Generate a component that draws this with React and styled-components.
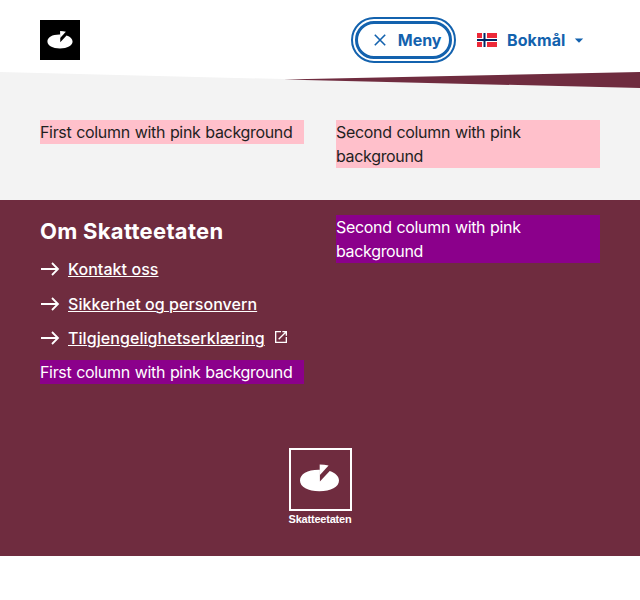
import React from 'react';
import styled, { createGlobalStyle } from 'styled-components';

const burgundy = '#6f2c3f';
const blue = '#1362ae';

const GlobalStyle = createGlobalStyle`
  *, *::before, *::after { box-sizing: border-box; }
  body {
    margin: 0;
    background: #fff;
    color: #1f1f1f;
    font-family: Inter, "Liberation Sans", sans-serif;
    font-size: 16px;
    line-height: 24px;
  }
`;

const Header = styled.header`
  height: 72px;
  padding: 12px 56px 4px 40px;
  display: flex;
  align-items: center;
  justify-content: space-between;
`;

const HomeLink = styled.a`
  width: 40px;
  height: 40px;
  margin: 8px 0;
  background: #000;
  svg { display: block; }
`;

const Actions = styled.div`
  display: flex;
  align-items: center;
  gap: 25px;
`;

const MenuButton = styled.button`
  width: 97px;
  height: 38px;
  padding: 0 7.5px 0 14px;
  display: flex;
  align-items: center;
  justify-content: space-between;
  border: 3px solid ${blue};
  border-radius: 19px;
  background: #fff;
  color: ${blue};
  font: 700 16px/24px Inter, sans-serif;
  outline: 2px solid ${blue};
  outline-offset: 2px;
`;

const LanguageButton = styled.button`
  width: 107px;
  height: 38px;
  padding: 0;
  display: flex;
  align-items: center;
  border: 0;
  background: none;
  color: ${blue};
  font: 700 16px/24px Inter, sans-serif;
  letter-spacing: 0.1px;
  .caret { margin-left: 8px; }
`;

const LanguageName = styled.span`
  margin-left: 10px;
`;

const Divider = styled.div`
  height: 16px;
  display: grid;
`;

const Slope = styled.div`
  grid-area: 1 / 1;
  background: ${(p) => p.$color};
  clip-path: polygon(${(p) => p.$shape});
`;

const Columns = styled.div`
  display: grid;
  grid-template-columns: 1fr 1fr;
  gap: 32px;
  align-items: start;
`;

const Main = styled.main`
  height: 112px;
  padding: 32px 40px;
  background: #f3f3f3;
`;

const Footer = styled.footer`
  height: 356px;
  padding: 15px 40px 30px;
  display: flex;
  flex-direction: column;
  justify-content: space-between;
  background: ${burgundy};
  color: #fff;
`;

const Note = styled.div`
  background: ${(p) => p.$color};
  font-weight: 400;
  letter-spacing: -0.33px;
  word-spacing: 0.7px;
`;

const Title = styled.h2`
  margin: 0;
  padding-bottom: 7px;
  font-size: 22px;
  line-height: 32px;
  font-weight: 700;
  letter-spacing: 0.29px;
`;

const LinkList = styled.ul`
  margin: 0;
  padding: 0 0 2px;
  list-style: none;
`;

const LinkItem = styled.li`
  height: 34.6px;
  padding-top: 3px;
  display: flex;
  align-items: flex-start;
  svg { flex: none; }
  .external { margin: 3px 0 0 8px; }
`;

const FooterLink = styled.a`
  margin-left: 8px;
  color: inherit;
  font-weight: 500;
  letter-spacing: 0.06px;
  text-decoration: underline;
  text-decoration-thickness: 1px;
  text-underline-offset: 1px;
`;

const LogoRow = styled.div`
  display: flex;
  justify-content: center;
`;

const Logo = styled.div`
  width: 64px;
  display: flex;
  flex-direction: column;
  align-items: center;
`;

const LogoFrame = styled.div`
  width: 63px;
  height: 63px;
  margin-left: 1px;
  border: 2px solid #fff;
  svg { display: block; }
`;

const LogoName = styled.span`
  height: 14px;
  margin-top: 1px;
  font: 700 11px/14px "Liberation Sans", Arial, sans-serif;
  letter-spacing: -0.22px;
  white-space: nowrap;
`;

const Pie = ({ size, box }) => (
  <svg width={size} height={size} viewBox={box} fill="#fff" aria-hidden="true">
    <path d="M30 17.5C18 17.3 10.5 21.8 10.5 28.3C10.5 34.8 18.5 39.1 29.9 39.1C41.4 39.1 49.5 34.8 49.5 28.3C49.5 24.2 46 20.8 40.2 18.9L30.4 29.4V17.5Z" />
    <path d="M30.2 12.2C33.2 12.2 36.3 12.5 39.1 13.2L30.2 23Z" />
  </svg>
);

const Arrow = () => (
  <svg width="20" height="24" viewBox="0 0 20 24" fill="none" stroke="#fff" strokeWidth="1.8" aria-hidden="true">
    <path d="M1 12H18M12 6L18 12L12 18" />
  </svg>
);

const External = () => (
  <svg className="external" width="16" height="16" viewBox="0 0 24 24" fill="#fff" aria-hidden="true">
    <path d="M19 19H5V5h7V3H3v18h18v-9h-2v7zM14 3v2h3.6l-9.8 9.8 1.4 1.4L19 6.4V10h2V3h-7z" />
  </svg>
);

const Flag = () => (
  <svg width="20" height="14" viewBox="0 0 20 14" aria-hidden="true">
    <path fill="#ed2939" d="M0 0h20v14H0z" />
    <path fill="#fff" d="M5 0h5v14H5zM0 5h20v4H0z" />
    <path fill="#002664" d="M6.5 0h2v14h-2zM0 6.1h20v1.8H0z" />
  </svg>
);

const links = [
  { text: 'Kontakt oss' },
  { text: 'Sikkerhet og personvern' },
  { text: 'Tilgjengelighetserklæring', external: true },
];

export default function App() {
  return (
    <>
      <GlobalStyle />
      <Header>
        <HomeLink aria-label="Skatteetaten">
          <Pie size={40} box="-1 -5 62 62" />
        </HomeLink>
        <Actions>
          <MenuButton>
            <svg width="16" height="16" viewBox="0 0 16 16" stroke={blue} strokeWidth="1.6" fill="none" aria-hidden="true">
              <path d="M2.8 2.8L13.2 13.2M13.2 2.8L2.8 13.2" />
            </svg>
            Meny
          </MenuButton>
          <LanguageButton>
            <Flag />
            <LanguageName>Bokmål</LanguageName>
            <svg className="caret" width="10" height="5" viewBox="0 0 10 5" fill={blue} aria-hidden="true">
              <path d="M0.8 0.5H9.2L5 4.7Z" />
            </svg>
          </LanguageButton>
        </Actions>
      </Header>
      <Divider>
        <Slope $color="#f3f3f3" $shape="0 0, 100% 100%, 0 100%" />
        <Slope $color={burgundy} $shape="284px 7.5px, 100% 0, 100% 100%" />
      </Divider>
      <Main>
        <Columns>
          <Note $color="pink">First column with pink background</Note>
          <Note $color="pink">Second column with pink background</Note>
        </Columns>
      </Main>
      <Footer>
        <Columns>
          <div>
            <Title>Om Skatteetaten</Title>
            <LinkList>
              {links.map((link) => (
                <LinkItem key={link.text}>
                  <Arrow />
                  <FooterLink>{link.text}</FooterLink>
                  {link.external && <External />}
                </LinkItem>
              ))}
            </LinkList>
            <Note $color="darkmagenta">First column with pink background</Note>
          </div>
          <Note $color="darkmagenta">Second column with pink background</Note>
        </Columns>
        <LogoRow>
          <Logo>
            <LogoFrame>
              <Pie size={59} box="1.5 -2.2 59 59" />
            </LogoFrame>
            <LogoName>Skatteetaten</LogoName>
          </Logo>
        </LogoRow>
      </Footer>
    </>
  );
}
